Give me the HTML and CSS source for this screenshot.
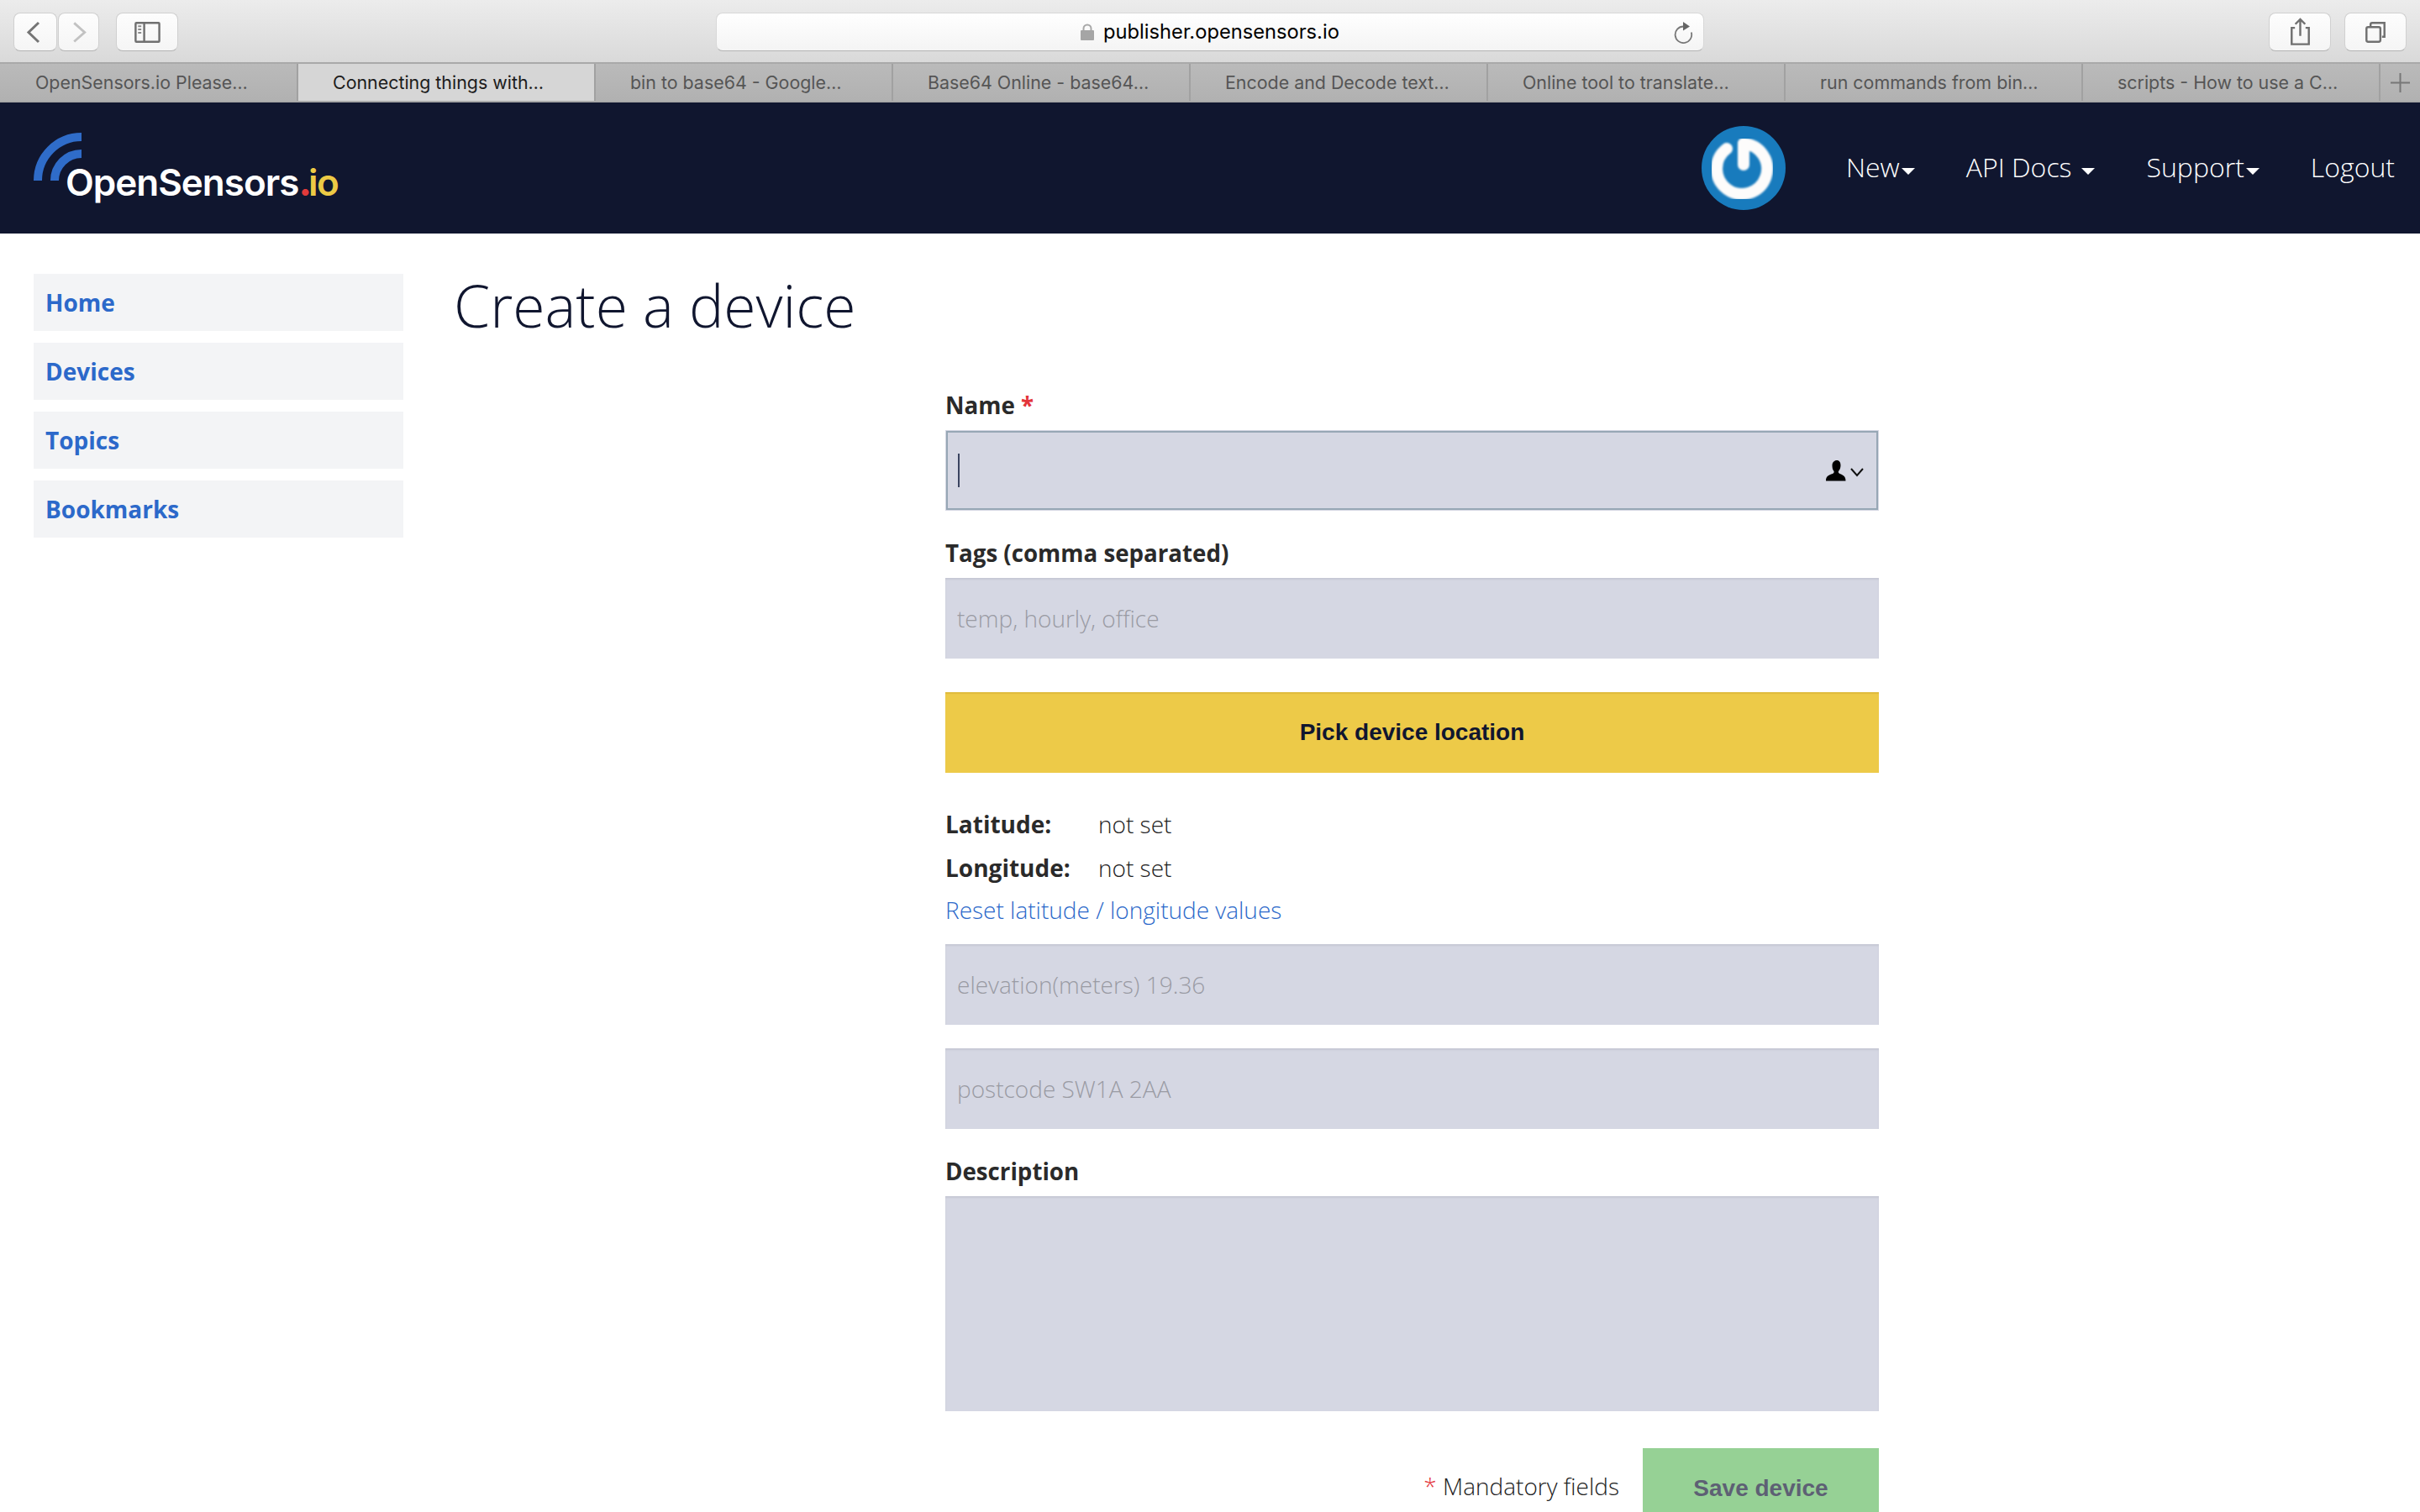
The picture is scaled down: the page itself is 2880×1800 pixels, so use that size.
FILE: index.html
```html
<!DOCTYPE html>
<html lang="en">
<head>
<meta charset="utf-8">
<title>Create a device</title>
<link rel="stylesheet" href="styles.css">
</head>
<body>
<header class="toolbar">
  <button class="tb tb-back" aria-label="Back"><svg width="50" height="44" viewBox="0 0 50 44"><path d="M29 11 17 22.500 29 34" class="ic ic-mid"/></svg></button>
  <button class="tb tb-fwd" aria-label="Forward"><svg width="49" height="44" viewBox="0 0 49 44"><path d="M19 11 32 22.500 19 34" class="ic ic-light"/></svg></button>
  <button class="tb tb-side" aria-label="Sidebar"><svg width="74" height="44" viewBox="0 0 74 44"><rect x="23" y="11" width="29" height="23" rx="1" class="ic ic-thin"/><path d="M33.500 11v23" class="ic ic-thin"/><path d="M26 15h4M26 19h4M26 23h4" class="ic ic-dots"/></svg></button>
  <div class="address">
    <svg class="lock" width="16" height="20" viewBox="0 0 16 20"><path d="M3.500 9V6a4.500 4.500 0 0 1 9 0v3" fill="none" stroke="#a8a8a8" stroke-width="2"/><rect y="8" width="16" height="12" rx="1" fill="#a5a5a5"/></svg>
    <span class="url">publisher.opensensors.io</span>
    <svg class="reload" width="24" height="27" viewBox="0 0 24 27"><path d="M12.500 6.500A9.800 9.800 0 1 0 21.800 13.500" fill="none" stroke="#777" stroke-width="1.800"/><path d="M12 1l8 5.500-8 5z" fill="#666"/></svg>
  </div>
  <button class="tb tb-share" aria-label="Share"><svg width="74" height="44" viewBox="0 0 74 44"><path d="M31 17h-4v20h21V17h-4" class="ic ic-thin"/><path d="M37.500 27V7M31.500 12.500l6-6 6 6" class="ic ic-thin"/></svg></button>
  <button class="tb tb-tabs" aria-label="Show tabs"><svg width="74" height="44" viewBox="0 0 74 44"><rect x="26" y="16" width="17" height="18" rx="2" class="ic ic-thin"/><path d="M31 15v-2a2 2 0 0 1 2-2h15v17h-3" class="ic ic-thin"/></svg></button>
</header>

<nav class="tabs">
  <div class="tab">OpenSensors.io Please…</div>
  <div class="tab tab-active">Connecting things with…</div>
  <div class="tab">bin to base64 - Google…</div>
  <div class="tab">Base64 Online - base64…</div>
  <div class="tab">Encode and Decode text…</div>
  <div class="tab">Online tool to translate…</div>
  <div class="tab">run commands from bin…</div>
  <div class="tab">scripts - How to use a C…</div>
  <div class="tab tab-plus"><svg width="23" height="23" viewBox="0 0 23 23"><path d="M11.500 0v23M0 11.500h23" class="ic ic-plus"/></svg></div>
</nav>

<header class="navbar">
  <a class="logo">
    <svg class="logo-arcs" width="60" height="60" viewBox="0 0 60 60"><path d="M5 58A52 52 0 0 1 57 6M25 58A32 32 0 0 1 57 26" fill="none" stroke="#2f6cc9" stroke-width="10"/></svg>
    <span class="logo-text">OpenSensors<span class="logo-dot">.</span><span class="logo-io">io</span></span>
  </a>
  <div class="nav-right">
    <svg class="power" width="100" height="100" viewBox="0 0 100 100">
      <defs><filter id="soft"><feGaussianBlur stdDeviation="0.8"/></filter></defs>
      <circle cx="50" cy="50" r="50" fill="#187bbd"/>
      <g filter="url(#soft)" fill="none" stroke="#fdfcfb" stroke-width="14" stroke-linecap="round">
        <path d="M50 21A30 30 0 1 1 30 27"/>
        <path d="M50 21V46"/>
      </g>
    </svg>
    <ul class="nav-links">
      <li><a class="caret">New</a></li>
      <li><a class="caret caret-gap">API Docs</a></li>
      <li><a class="caret">Support</a></li>
      <li><a>Logout</a></li>
    </ul>
  </div>
</header>

<main class="page">
  <aside class="side">
    <a class="side-item">Home</a>
    <a class="side-item">Devices</a>
    <a class="side-item">Topics</a>
    <a class="side-item">Bookmarks</a>
  </aside>
  <section class="content">
    <h1 class="title">Create a device</h1>
    <form class="form">
      <label class="label">Name <span class="req">*</span></label>
      <div class="field">
        <input class="input input-focus" type="text" aria-label="Name">
        <span class="caret-line"></span>
        <svg class="keychain" width="46" height="26" viewBox="0 0 46 26"><path d="M13 0c3 0 4.500 2.500 4.500 6 0 3-1 5-2.500 7-.5 1-.2 2 1.500 3 4 1.500 7 3 7 8.500H0C0 19 3 17.500 8 16c1.500-1 2-2 1.500-3C8 11 7.500 9 7.500 6 7.500 2.500 10 0 13 0z" fill="#000"/><path d="M30 10l7 8 7-8" fill="none" stroke="#111" stroke-width="2"/></svg>
      </div>
      <label class="label label-next">Tags (comma separated)</label>
      <input class="input" type="text" placeholder="temp, hourly, office">
      <button type="button" class="pick">Pick device location</button>
      <dl class="coords">
        <div class="coord"><dt>Latitude:</dt><dd>not set</dd></div>
        <div class="coord"><dt>Longitude:</dt><dd>not set</dd></div>
      </dl>
      <a class="reset">Reset latitude / longitude values</a>
      <input class="input input-elev" type="text" placeholder="elevation(meters) 19.36">
      <input class="input input-post" type="text" placeholder="postcode SW1A 2AA">
      <label class="label label-desc">Description</label>
      <textarea class="input area" aria-label="Description"></textarea>
      <div class="actions">
        <span class="mandatory"><span class="req">*</span> Mandatory fields</span>
        <button type="button" class="save">Save device</button>
      </div>
    </form>
  </section>
</main>
</body>
</html>
```

FILE: styles.css
```css
* { box-sizing: border-box; }
html, body { margin: 0; height: 1800px; overflow: hidden; background: #fff; }
body { font-family: "Open Sans", sans-serif; color: #222; }
a { text-decoration: none; }

/* browser chrome */
.toolbar {
  height: 74px;
  display: flex;
  align-items: flex-start;
  padding-top: 15px;
  background: linear-gradient(#ececec, #d9d9d9);
}
.tb {
  height: 46px;
  padding: 0;
  border: 1px solid #d0d0d0;
  border-bottom-color: #b4b4b4;
  border-radius: 8px;
  background: linear-gradient(#fdfdfd, #f5f5f5);
  display: flex;
  align-items: center;
  justify-content: center;
}
.tb-back { width: 52px; margin-left: 16px; }
.tb-fwd { width: 49px; margin-left: 1px; }
.tb-side { width: 74px; margin-left: 20px; }
.tb-share { width: 74px; margin-left: 672px; }
.tb-tabs { width: 74px; margin-left: 16px; }
.ic { fill: none; stroke-linecap: butt; }
.ic-mid { stroke: #757575; stroke-width: 3; }
.ic-light { stroke: #c2c2c2; stroke-width: 3; }
.ic-thin { stroke: #707070; stroke-width: 2.500; }
.ic-dots { stroke: #8a8a8a; stroke-width: 2; }
.ic-plus { stroke: #777; stroke-width: 2; }

.address {
  width: 1176px;
  height: 46px;
  margin-left: 640px;
  position: relative;
  display: flex;
  align-items: center;
  justify-content: center;
  gap: 11px;
  border: 1px solid #d8d8d8;
  border-bottom-color: #b4b4b4;
  border-radius: 8px;
  background: linear-gradient(#fff, #f4f4f4);
}
.url { font-family: Inter, sans-serif; font-size: 23.700px; color: #000; line-height: 48px; }
.lock { margin-top: 0; }
.reload { position: absolute; right: 12px; top: 9px; }

.tabs {
  height: 48px;
  display: grid;
  grid-template-columns: 355px repeat(7, 354px) 47px;
  border-top: 2px solid #a9a9a9;
  border-bottom: 2px solid #a9a9a9;
}
.tab {
  display: flex;
  align-items: center;
  padding-left: 41px;
  font-family: Inter, sans-serif;
  font-size: 21.400px;
  color: #555;
  white-space: nowrap;
  border-right: 2px solid #a1a1a1;
  background: linear-gradient(#bababa, #b1b1b1);
}
.tab:first-child { padding-left: 42px; }
.tab-active { background: #d6d6d6; color: #1c1c1c; }
.tab-plus { padding-left: 12px; border-right: 0; }

/* site navigation */
.navbar {
  height: 156px;
  background: #10162f;
  display: flex;
  align-items: center;
  justify-content: space-between;
  padding: 0 30px 0 40px;
}
.logo { position: relative; display: block; width: 360px; height: 100px; }
.logo-arcs { position: absolute; left: 0; top: 7px; }
.logo-text {
  position: absolute;
  left: 38px;
  top: 37px;
  font-family: Inter, sans-serif;
  font-size: 44px;
  font-weight: 600;
  letter-spacing: -1px;
  line-height: 60px;
  color: #fff;
  white-space: nowrap;
}
.logo-dot { color: #e23a3a; font-weight: 800; letter-spacing: -4px; }
.logo-io { color: #edca45; letter-spacing: -1.500px; }
.nav-right { display: flex; align-items: center; gap: 72px; }
.power { display: block; }
.nav-links {
  display: flex;
  gap: 61px;
  margin: 0 0 4px;
  padding: 0;
  list-style: none;
  font-size: 32px;
  font-weight: 300;
  color: #fff;
}
.caret::after {
  content: "";
  display: inline-block;
  margin-left: 2px;
  vertical-align: 3px;
  border-left: 8px solid transparent;
  border-right: 8px solid transparent;
  border-top: 8px solid #fff;
}
.caret-gap::after { margin-left: 12px; }

/* page */
.page { display: flex; align-items: flex-start; padding: 48px 0 0 40px; }
.side { width: 440px; display: flex; flex-direction: column; gap: 14px; }
.side-item {
  height: 68px;
  padding-left: 14px;
  display: flex;
  align-items: center;
  background: #f3f4f6;
  color: #2c69ca;
  font-size: 28px;
  font-weight: 700;
}
.content { margin-left: 60px; flex: 0 0 auto; width: 1696px; }
.title {
  margin: 0;
  height: 88px;
  font-size: 69.600px;
  font-weight: 300;
  line-height: 74px;
  color: #10162f;
}
.form { width: 1111px; margin: 48px 0 0 585px; display: flex; flex-direction: column; align-items: stretch; }
.label { height: 40px; margin-bottom: 10px; font-size: 27.700px; font-weight: 700; line-height: 40px; color: #2a2a2a; }
.label-next { margin-top: 30px; }
.label-desc { margin-top: 31px; margin-bottom: 9px; line-height: 38px; }
.req { color: #e3343a; }
.field { position: relative; height: 96px; }
.input {
  display: block;
  width: 100%;
  height: 96px;
  padding: 0 14px;
  border: 0;
  border-radius: 0;
  background: #d5d7e3;
  box-shadow: inset 0 2px 2px #c6c8d4;
  font-family: "Open Sans", sans-serif;
  font-size: 28px;
  font-weight: 300;
  color: #222;
  outline: none;
  resize: none;
}
.input::placeholder { color: #9a9ba3; opacity: 1; }
.input-focus { outline: 2px solid #97a7b5; outline-offset: -3px; box-shadow: none; }
.caret-line { position: absolute; left: 15px; top: 28px; width: 2px; height: 40px; background: #3a4460; }
.keychain { position: absolute; right: 17px; top: 36px; }
.pick, .save {
  border: 0;
  font-family: "Liberation Sans", sans-serif;
  font-size: 28px;
  font-weight: 700;
}
.pick {
  height: 96px;
  margin-top: 40px;
  background: #edca48;
  box-shadow: inset 0 2px 1px #dfbb3c;
  color: #10162f;
}
.coords { margin: 35px 0 0; font-size: 28px; }
.coord { display: flex; height: 52px; align-items: center; }
.coord dt { width: 182px; font-weight: 700; color: #2a2a2a; }
.coord dd { margin: 0; font-weight: 300; color: #222; }
.reset { height: 48px; font-size: 28px; font-weight: 300; line-height: 48px; color: #2c69ca; }
.input-elev { margin-top: 17px; }
.input-post { margin-top: 28px; }
.area { height: 256px; flex: 0 0 256px; }
.actions { display: flex; justify-content: flex-end; align-items: center; gap: 28px; margin-top: 44px; }
.mandatory { padding-bottom: 6px; font-size: 28px; font-weight: 300; color: #222; }
.save { width: 281px; height: 96px; background: #96d195; color: #5d6074; }
```
